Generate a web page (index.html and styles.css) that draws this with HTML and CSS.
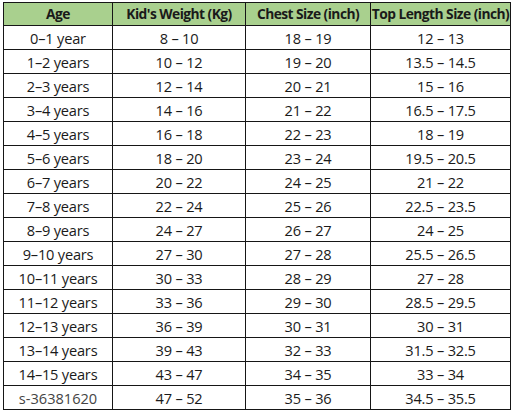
FILE: index.html
```html
<!DOCTYPE html>
<html lang="en">
<head>
  <meta charset="UTF-8">
  <meta name="viewport" content="width=device-width, initial-scale=1.0">
  <title>Kids Size Chart</title>
  <link rel="stylesheet" href="styles.css">
</head>
<body>
  <!-- Size chart table -->
  <div class="chart">
    <table class="size-table">
      <colgroup>
        <col class="col-age">
        <col class="col-weight">
        <col class="col-chest">
        <col class="col-length">
      </colgroup>
      <thead>
        <tr>
          <th>Age</th>
          <th>Kid's Weight (Kg)</th>
          <th>Chest Size (inch)</th>
          <th>Top Length Size (inch)</th>
        </tr>
      </thead>
      <tbody>
        <tr><td>0–1 year</td><td>8 – 10</td><td>18 – 19</td><td>12 – 13</td></tr>
        <tr><td>1–2 years</td><td>10 – 12</td><td>19 – 20</td><td>13.5 – 14.5</td></tr>
        <tr><td>2–3 years</td><td>12 – 14</td><td>20 – 21</td><td>15 – 16</td></tr>
        <tr><td>3–4 years</td><td>14 – 16</td><td>21 – 22</td><td>16.5 – 17.5</td></tr>
        <tr><td>4–5 years</td><td>16 – 18</td><td>22 – 23</td><td>18 – 19</td></tr>
        <tr><td>5–6 years</td><td>18 – 20</td><td>23 – 24</td><td>19.5 – 20.5</td></tr>
        <tr><td>6–7 years</td><td>20 – 22</td><td>24 – 25</td><td>21 – 22</td></tr>
        <tr><td>7–8 years</td><td>22 – 24</td><td>25 – 26</td><td>22.5 – 23.5</td></tr>
        <tr><td>8–9 years</td><td>24 – 27</td><td>26 – 27</td><td>24 – 25</td></tr>
        <tr><td>9–10 years</td><td>27 – 30</td><td>27 – 28</td><td>25.5 – 26.5</td></tr>
        <tr><td>10–11 years</td><td>30 – 33</td><td>28 – 29</td><td>27 – 28</td></tr>
        <tr><td>11–12 years</td><td>33 – 36</td><td>29 – 30</td><td>28.5 – 29.5</td></tr>
        <tr><td>12–13 years</td><td>36 – 39</td><td>30 – 31</td><td>30 – 31</td></tr>
        <tr><td>13–14 years</td><td>39 – 43</td><td>32 – 33</td><td>31.5 – 32.5</td></tr>
        <tr><td>14–15 years</td><td>43 – 47</td><td>34 – 35</td><td>33 – 34</td></tr>
        <tr><td class="watermark">s-36381620</td><td>47 – 52</td><td>35 – 36</td><td>34.5 – 35.5</td></tr>
      </tbody>
    </table>
  </div>
</body>
</html>
```

FILE: styles.css
```css
/* General body styling */
body {
  margin: 0;
  background: #fff;
  font-family: "Open Sans", "Liberation Sans", sans-serif;
  color: #1a1a1a;
}

/* Chart wrapper */
.chart {
  padding: 2px 2px 0 3px;
}

/* Table styling */
.size-table {
  border-collapse: collapse;
  table-layout: fixed;
  width: 507px;
}

.col-age { width: 109px; }
.col-weight { width: 133px; }
.col-chest { width: 125px; }
.col-length { width: 140px; }

.size-table th,
.size-table td {
  border: 1.5px solid #161616;
  text-align: center;
  padding: 0;
  white-space: nowrap;
  overflow: hidden;
  line-height: 18px;
}

/* Header row */
.size-table thead tr {
  height: 23px;
}

.size-table th {
  background: #a9d08e;
  font-size: 13.8px;
  font-weight: 700;
  letter-spacing: -0.55px;
}

/* Data rows */
.size-table tbody tr {
  height: 24px;
}

.size-table td {
  font-size: 14.6px;
  letter-spacing: -0.2px;
}

.size-table td.watermark {
  color: #444;
  letter-spacing: 0;
}
```
